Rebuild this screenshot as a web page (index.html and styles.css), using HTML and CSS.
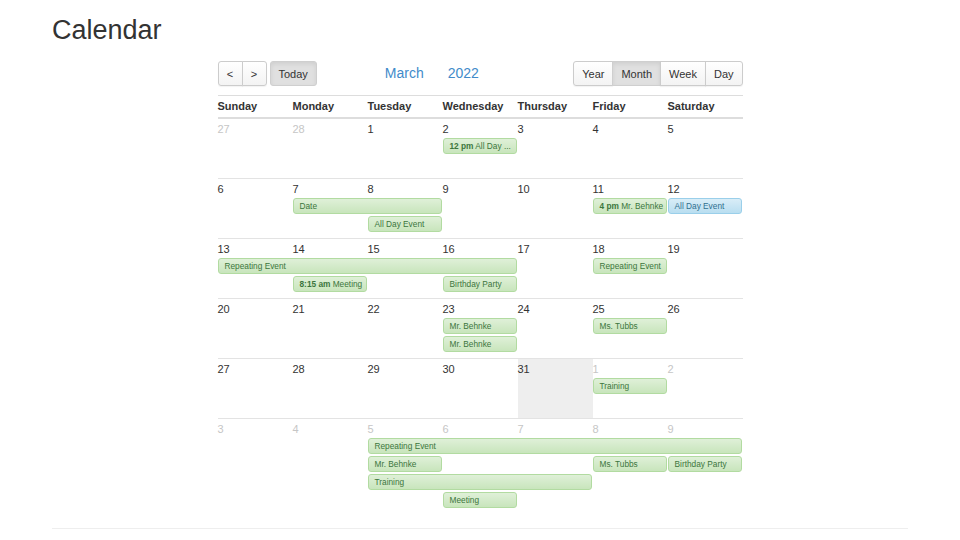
FILE: index.html
```html
<!DOCTYPE html>
<html lang="en">
<head>
<meta charset="utf-8">
<title>Calendar</title>
<link rel="stylesheet" href="styles.css">
</head>
<body>
<div class="container">
  <h1 class="page-title">Calendar</h1>
  <div class="cal">
    <div class="toolbar">
      <div class="nav-group">
        <div class="btn-group">
          <button class="btn">&lt;</button>
          <button class="btn">&gt;</button>
        </div>
        <button class="btn active">Today</button>
      </div>
      <div class="cal-title"><span>March</span><span>2022</span></div>
      <div class="btn-group views">
        <button class="btn">Year</button>
        <button class="btn active">Month</button>
        <button class="btn">Week</button>
        <button class="btn">Day</button>
      </div>
    </div>

    <div class="dow">
      <div>Sunday</div><div>Monday</div><div>Tuesday</div><div>Wednesday</div><div>Thursday</div><div>Friday</div><div>Saturday</div>
    </div>

    <div class="week first">
      <div class="num other">27</div><div class="num other">28</div><div class="num">1</div><div class="num">2</div><div class="num">3</div><div class="num">4</div><div class="num">5</div>
      <div class="ev c4 s1 r2"><b>12 pm</b> All Day ...</div>
    </div>

    <div class="week">
      <div class="num">6</div><div class="num">7</div><div class="num">8</div><div class="num">9</div><div class="num">10</div><div class="num">11</div><div class="num">12</div>
      <div class="ev c2 s2 r2">Date</div>
      <div class="ev c3 s1 r3">All Day Event</div>
      <div class="ev c6 s1 r2"><b>4 pm</b> Mr. Behnke</div>
      <div class="ev blue c7 s1 r2">All Day Event</div>
    </div>

    <div class="week">
      <div class="num">13</div><div class="num">14</div><div class="num">15</div><div class="num">16</div><div class="num">17</div><div class="num">18</div><div class="num">19</div>
      <div class="ev c1 s4 r2">Repeating Event</div>
      <div class="ev c2 s1 r3"><b>8:15 am</b> Meeting</div>
      <div class="ev c4 s1 r3">Birthday Party</div>
      <div class="ev c6 s1 r2">Repeating Event</div>
    </div>

    <div class="week">
      <div class="num">20</div><div class="num">21</div><div class="num">22</div><div class="num">23</div><div class="num">24</div><div class="num">25</div><div class="num">26</div>
      <div class="ev c4 s1 r2">Mr. Behnke</div>
      <div class="ev c4 s1 r3">Mr. Behnke</div>
      <div class="ev c6 s1 r2">Ms. Tubbs</div>
    </div>

    <div class="week with-today">
      <div class="today-bg"></div>
      <div class="num c1">27</div><div class="num c2">28</div><div class="num c3">29</div><div class="num c4">30</div><div class="num c5">31</div><div class="num other c6">1</div><div class="num other c7">2</div>
      <div class="ev c6 s1 r2">Training</div>
    </div>

    <div class="week last">
      <div class="num other">3</div><div class="num other">4</div><div class="num other">5</div><div class="num other">6</div><div class="num other">7</div><div class="num other">8</div><div class="num other">9</div>
      <div class="ev c3 s5 r2">Repeating Event</div>
      <div class="ev c3 s1 r3">Mr. Behnke</div>
      <div class="ev c6 s1 r3">Ms. Tubbs</div>
      <div class="ev c7 s1 r3">Birthday Party</div>
      <div class="ev c3 s3 r4">Training</div>
      <div class="ev c4 s1 r5">Meeting</div>
    </div>
  </div>
  <hr class="rule">
</div>
</body>
</html>
```

FILE: styles.css
```css
* { box-sizing: border-box; }

html, body {
  margin: 0;
  padding: 0;
  background: #fff;
}

body {
  font-family: "Liberation Sans", Arial, Helvetica, sans-serif;
  color: #333;
  font-size: 10.5px;
}

.container {
  width: 856px;
  margin: 0 auto;
}

.page-title {
  margin: 15px 0 16px;
  font-size: 27px;
  line-height: 30px;
  font-weight: 400;
  color: #333;
}

.cal {
  width: 525px;
  margin: 0 auto;
}

/* toolbar */
.toolbar {
  display: flex;
  align-items: center;
  height: 25px;
  margin-bottom: 9px;
}

.nav-group {
  display: flex;
  gap: 3px;
}

.btn-group {
  display: flex;
}

.btn {
  height: 25px;
  margin: 0;
  padding: 0 8px;
  font-family: "Liberation Sans", Arial, Helvetica, sans-serif;
  font-size: 11px;
  color: #333;
  background: linear-gradient(#fff, #f3f3f3);
  border: 1px solid #ccc;
  border-radius: 3px;
  box-shadow: 0 1px 1px rgba(0,0,0,0.05);
}

.btn.active {
  background: #e0e0e0;
  border-color: #cfcfcf;
  box-shadow: inset 0 2px 4px rgba(0,0,0,0.08);
}

.btn-group .btn + .btn { margin-left: -1px; }
.btn-group .btn:not(:first-child) { border-top-left-radius: 0; border-bottom-left-radius: 0; }
.btn-group .btn:not(:last-child) { border-top-right-radius: 0; border-bottom-right-radius: 0; }

.nav-group .btn-group .btn { width: 25px; padding: 0; }

.cal-title {
  display: flex;
  gap: 24px;
  margin-left: 68px;
  margin-top: -2px;
  font-size: 14px;
  color: #428bca;
}

.views { margin-left: auto; }

/* day-of-week header */
.dow {
  display: grid;
  grid-template-columns: repeat(7, 75px);
  height: 24px;
  border-top: 1px solid #ddd;
  border-bottom: 2px solid #ddd;
  font-weight: 700;
  font-size: 11px;
  line-height: 21px;
  color: #333;
}

/* week rows */
.week {
  display: grid;
  grid-template-columns: repeat(7, 75px);
  grid-template-rows: 19px;
  grid-auto-rows: 18px;
  align-content: start;
  min-height: 60px;
  border-top: 1px solid #e3e3e3;
}

.week.first {
  border-top: 0;
  min-height: 59px;
}

.week.with-today {
  grid-template-rows: 19px 18px 22px;
}

.today-bg {
  grid-column: 5;
  grid-row: 1 / 4;
  background: #eee;
}

.num {
  grid-row: 1;
  padding-top: 3px;
  font-size: 11px;
  line-height: 15px;
  color: #333;
}

.num.other { color: #c6c6c6; }

.ev {
  height: 16px;
  margin-right: 1px;
  padding: 0 6px;
  font-size: 8.3px;
  line-height: 14px;
  color: #3c763d;
  background: linear-gradient(#dff0d8, #c8e5bc);
  border: 1px solid #b2dba1;
  border-radius: 3px;
  white-space: nowrap;
  overflow: hidden;
}

.ev b { font-weight: 700; }

.ev.blue {
  color: #31708f;
  background: linear-gradient(#d9edf7, #b9def0);
  border-color: #9acfea;
}

.c1 { grid-column-start: 1; }
.c2 { grid-column-start: 2; }
.c3 { grid-column-start: 3; }
.c4 { grid-column-start: 4; }
.c5 { grid-column-start: 5; }
.c6 { grid-column-start: 6; }
.c7 { grid-column-start: 7; }

.s1 { grid-column-end: span 1; }
.s2 { grid-column-end: span 2; }
.s3 { grid-column-end: span 3; }
.s4 { grid-column-end: span 4; }
.s5 { grid-column-end: span 5; }

.r2 { grid-row: 2; }
.r3 { grid-row: 3; }
.r4 { grid-row: 4; }
.r5 { grid-row: 5; }

.rule {
  margin: 18px 0 0;
  border: 0;
  border-top: 1px solid #eee;
}
```
